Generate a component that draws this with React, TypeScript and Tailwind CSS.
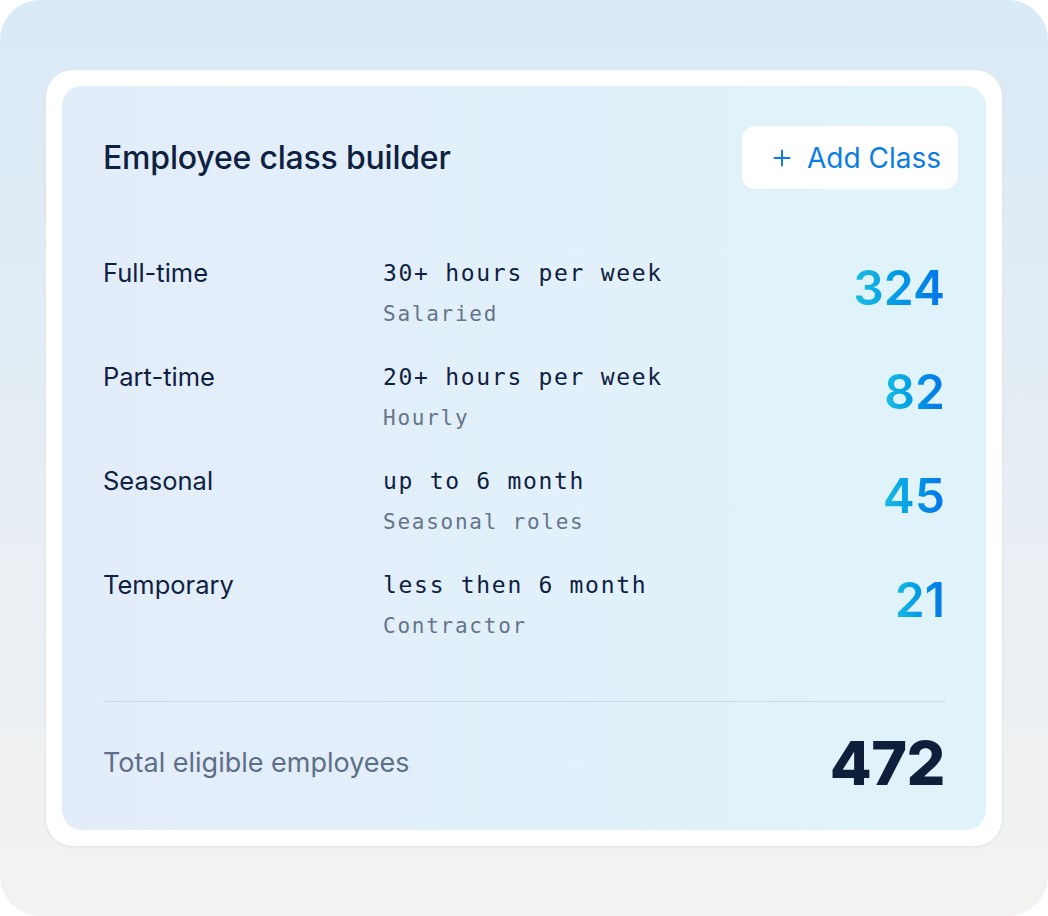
import { Plus } from "lucide-react";
import React from "react";

const rows = [
  { name: "Full-time", rule: "30+ hours per week", kind: "Salaried", count: 324 },
  { name: "Part-time", rule: "20+ hours per week", kind: "Hourly", count: 82 },
  { name: "Seasonal", rule: "up to 6 month", kind: "Seasonal roles", count: 45 },
  { name: "Temporary", rule: "less then 6 month", kind: "Contractor", count: 21 },
];

const sans = { fontFamily: "Inter, 'Noto Sans', sans-serif" };

export default function App() {
  return (
    <div className="w-[1048px] h-[916px] bg-white" style={sans}>
      <div className="w-full h-full rounded-[40px] bg-gradient-to-b from-[#d9eaf7] via-[#e6eef4] to-[#f3f2f1] px-[45px] pt-[69px] pb-[69px]">
        <div className="h-full rounded-[28px] bg-white border border-[#e4e6ea] p-[16px] shadow-[0_1px_3px_rgba(15,30,60,0.04)]">
          <div className="h-full rounded-[20px] bg-gradient-to-r from-[#e3edfa] to-[#e0f3fa] pl-[41px] pr-[28px] pt-[40px] pb-[36px] flex flex-col">
            {/* header */}
            <div className="flex items-center justify-between">
              <h1 className="text-[32px] leading-[40px] font-medium text-[#0f2141] tracking-[-0.2px]">
                Employee class builder
              </h1>
              <button className="h-[63px] flex items-center gap-[12px] bg-white rounded-[13px] pl-[27px] pr-[17px] text-[#0a7de4]">
                <Plus size={26} strokeWidth={1.8} />
                <span className="text-[28px] leading-none">Add Class</span>
              </button>
            </div>

            {/* rows */}
            <div className="mt-[66px] pr-[13px] flex flex-col gap-[27px]">
              {rows.map((r) => (
                <div key={r.name} className="flex items-start">
                  <div className="w-[280px] text-[25.5px] leading-[36px] text-[#0f2141]">{r.name}</div>
                  <div className="flex-1" style={{ fontFamily: "'DejaVu Sans Mono', 'Liberation Mono', monospace" }}>
                    <div className="text-[23px] leading-[36px] tracking-[1.7px] text-[#0f2141]">{r.rule}</div>
                    <div className="mt-[5px] text-[21px] leading-[36px] tracking-[1.75px] text-[#66758b]">{r.kind}</div>
                  </div>
                  <div className="mt-[5px] text-[48px] leading-[56px] font-semibold bg-gradient-to-r from-[#1bbde2] to-[#0873e8] bg-clip-text text-transparent">
                    {r.count}
                  </div>
                </div>
              ))}
            </div>

            <div className="mt-auto mr-[12px] h-px bg-[#cddbe6]" />

            <div className="mt-[30px] pr-[13px] flex items-center justify-between h-[62px]">
              <span className="text-[27px] text-[#5e6f87]">Total eligible employees</span>
              <span className="text-[61px] leading-none font-extrabold text-[#0e1f3c] tracking-[-0.5px]">472</span>
            </div>
          </div>
        </div>
      </div>
    </div>
  );
}
